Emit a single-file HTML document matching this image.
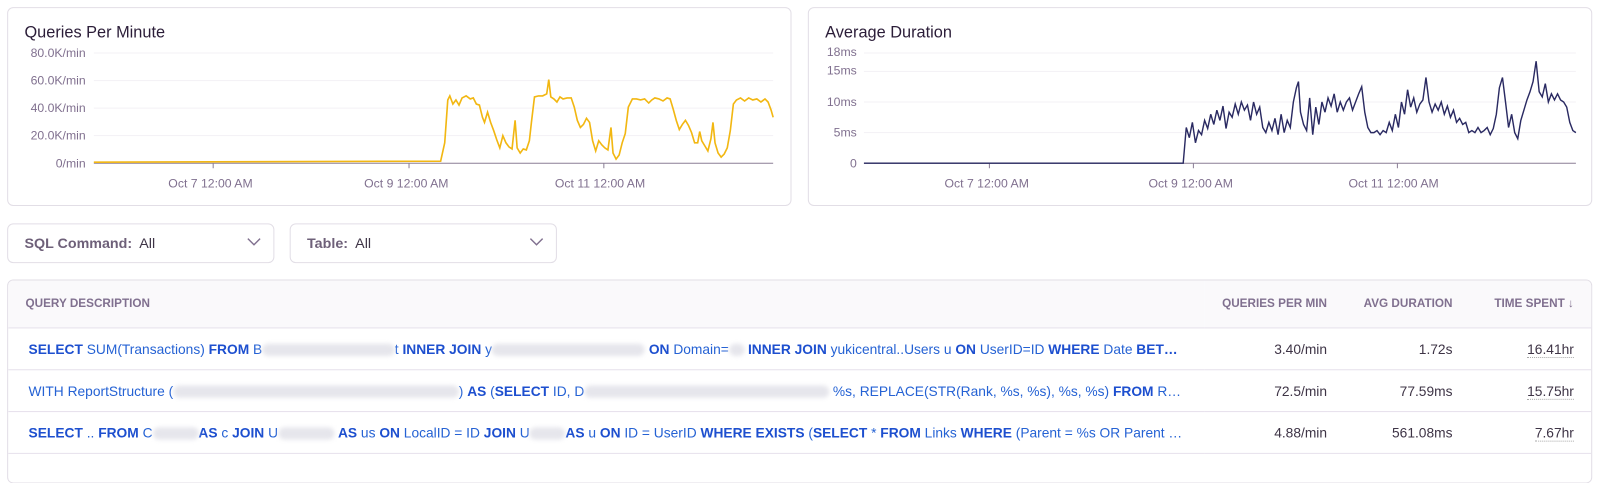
<!DOCTYPE html>
<html><head><meta charset="utf-8"><style>
body{margin:0;width:1600px;height:459px;background:#fff;font-family:"Liberation Sans",sans-serif;overflow:hidden}
#w{position:absolute;left:0;top:0;width:1569px;height:450px;transform:scale(1.02);transform-origin:0 0}
.panel{position:absolute;border:1px solid #e2dee6;border-radius:6px;background:#fff;box-sizing:border-box}
.title{position:absolute;font-size:16px;color:#2b1d38}
.ax{position:absolute;font-size:12px;color:#80708f}
.dd{position:absolute;top:219px;height:39px;border:1px solid #e2dee6;border-radius:6px;box-sizing:border-box;font-size:14px;color:#3e3446;line-height:37px;padding-left:16px}
.dd b{font-weight:bold;color:#6e6079}
.chev{position:absolute;right:12px;top:13px}
table{border-collapse:collapse;width:100%;font-size:13.5px;table-layout:fixed}
th{font-size:11.5px;color:#80708f;font-weight:bold;height:46px;text-align:right;background:#faf9fb;border-bottom:1px solid #e7e1ec;padding:0}
td{height:40px;border-bottom:1px solid #e7e1ec;text-align:right;color:#3e3446;white-space:nowrap;overflow:hidden;padding:0}
.q{color:#2562d4;text-align:left;padding-left:20px}
.q b{color:#1d4fcf}
.bl{display:inline-block;height:12px;vertical-align:middle;background:#e6e6ec;border-radius:6px;filter:blur(2px)}
.u{border-bottom:1px dotted #aaa}
</style></head><body><div id="w">
<div class="panel" style="left:7px;top:7px;width:769px;height:195px"></div>
<div class="panel" style="left:792px;top:7px;width:769px;height:195px"></div>
<div class="title" style="left:24px;top:24px">Queries Per Minute</div>
<div class="title" style="left:809px;top:24px">Average Duration</div>
<svg style="position:absolute;left:0;top:0" width="1600" height="210">
<g stroke="#f3f1f5"><line x1="92" y1="52" x2="758" y2="52"/><line x1="92" y1="79" x2="758" y2="79"/><line x1="92" y1="106" x2="758" y2="106"/><line x1="92" y1="133" x2="758" y2="133"/>
<line x1="847" y1="52" x2="1545" y2="52"/><line x1="847" y1="70" x2="1545" y2="70"/><line x1="847" y1="100" x2="1545" y2="100"/><line x1="847" y1="130" x2="1545" y2="130"/></g>
<g stroke="#8b7f96"><line x1="92" y1="160" x2="758" y2="160"/><line x1="209" y1="160" x2="209" y2="165"/><line x1="401" y1="160" x2="401" y2="165"/><line x1="592" y1="160" x2="592" y2="165"/>
<line x1="847" y1="160" x2="1545" y2="160"/><line x1="970" y1="160" x2="970" y2="165"/><line x1="1170" y1="160" x2="1170" y2="165"/><line x1="1370" y1="160" x2="1370" y2="165"/></g>
<polyline fill="none" stroke="#f2b712" stroke-width="1.6" points="92,159 432,158 436,140 439,98 441,94 444,102 447,98 450,103 453,96 457,94 461,97 464,96 467,102 470,103 473,115 475,120 478,110 481,120 484,128 487,137 490,145 493,133 496,140 499,144 502,146 505,118 507,145 510,150 513,146 516,147 519,138 521,120 524,95 528,94 532,94 536,92 538,78 540,95 543,97 546,100 549,95 552,97 556,96 560,96 563,105 566,118 569,125 572,122 575,116 578,120 581,138 584,148 587,138 590,142 593,145 596,147 599,125 601,150 604,156 607,152 610,140 613,131 616,105 620,97 624,97 628,98 632,97 636,101 639,98 642,96 646,97 650,99 654,96 657,97 660,107 663,118 666,127 669,122 672,118 675,123 678,130 681,140 684,140 686,129 688,138 691,143 694,148 697,136 699,120 701,140 704,150 707,154 710,151 713,145 716,128 719,102 722,98 726,96 730,99 734,96 738,98 742,97 746,100 750,97 753,100 756,108 758,115"/>
<polyline fill="none" stroke="#2a2a62" stroke-width="1.4" points="847,160 1160,160 1163,125 1166,135 1169,120 1172,140 1175,128 1178,132 1181,118 1184,126 1187,112 1190,122 1193,108 1196,118 1199,104 1202,126 1205,110 1208,115 1211,102 1214,112 1217,100 1220,108 1223,103 1226,118 1229,100 1232,112 1235,105 1238,125 1241,130 1244,120 1247,128 1250,116 1253,132 1256,112 1259,130 1262,118 1265,125 1268,100 1271,86 1273,80 1275,110 1278,122 1281,128 1284,96 1287,132 1290,105 1293,122 1296,100 1299,110 1302,96 1305,104 1308,92 1311,110 1314,100 1317,108 1320,100 1323,96 1326,108 1329,100 1332,92 1335,85 1338,110 1341,125 1344,130 1347,130 1350,128 1353,132 1356,128 1359,130 1362,120 1365,128 1368,112 1371,125 1374,100 1377,112 1380,88 1383,105 1386,96 1389,110 1392,102 1395,98 1398,76 1401,100 1404,110 1407,102 1410,108 1413,100 1416,112 1419,104 1422,115 1425,108 1428,120 1431,116 1434,122 1437,120 1440,130 1443,128 1446,130 1449,125 1452,130 1455,128 1458,125 1461,132 1464,126 1467,112 1470,86 1473,76 1476,100 1479,125 1482,112 1485,130 1488,136 1491,118 1494,108 1497,98 1500,90 1503,80 1506,60 1509,90 1512,95 1515,82 1518,100 1521,92 1524,98 1527,92 1530,98 1533,100 1536,105 1539,120 1542,128 1545,130"/>
</svg>
<div class="ax" style="right:1485px;top:45px">80.0K/min</div>
<div class="ax" style="right:1485px;top:72px">60.0K/min</div>
<div class="ax" style="right:1485px;top:99px">40.0K/min</div>
<div class="ax" style="right:1485px;top:126px">20.0K/min</div>
<div class="ax" style="right:1485px;top:153px">0/min</div>
<div class="ax" style="left:165px;top:173px">Oct 7 12:00 AM</div>
<div class="ax" style="left:357px;top:173px">Oct 9 12:00 AM</div>
<div class="ax" style="left:544px;top:173px">Oct 11 12:00 AM</div>
<div class="ax" style="right:729px;top:44px">18ms</div>
<div class="ax" style="right:729px;top:62px">15ms</div>
<div class="ax" style="right:729px;top:93px">10ms</div>
<div class="ax" style="right:729px;top:123px">5ms</div>
<div class="ax" style="right:729px;top:153px">0</div>
<div class="ax" style="left:926px;top:173px">Oct 7 12:00 AM</div>
<div class="ax" style="left:1126px;top:173px">Oct 9 12:00 AM</div>
<div class="ax" style="left:1322px;top:173px">Oct 11 12:00 AM</div>
<div class="dd" style="left:7px;width:262px"><b>SQL Command:</b>&nbsp; All<svg class="chev" width="14" height="9"><path d="M1 1l6 6 6-6" fill="none" stroke="#80708f" stroke-width="1.4"/></svg></div>
<div class="dd" style="left:284px;width:262px"><b>Table:</b>&nbsp; All<svg class="chev" width="14" height="9"><path d="M1 1l6 6 6-6" fill="none" stroke="#80708f" stroke-width="1.4"/></svg></div>
<div class="panel" style="left:7px;top:274px;width:1554px;height:200px;overflow:hidden">
<table>
<colgroup><col><col style="width:120px"><col style="width:123px"><col style="width:136px"></colgroup>
<tr><th style="text-align:left;padding-left:17px">QUERY DESCRIPTION</th><th>QUERIES PER MIN</th><th>AVG DURATION</th><th style="padding-right:17px">TIME SPENT ↓</th></tr>
<tr><td class="q"><b>SELECT</b> SUM(Transactions) <b>FROM</b> B<span class="bl" style="width:130px"></span>t <b>INNER JOIN</b> y<span class="bl" style="width:150px"></span> <b>ON</b> Domain=<span class="bl" style="width:15px"></span> <b>INNER JOIN</b> yukicentral..Users u <b>ON</b> UserID=ID <b>WHERE</b> Date <b>BET…</b></td><td>3.40/min</td><td>1.72s</td><td style="padding-right:17px"><span class="u">16.41hr</span></td></tr>
<tr><td class="q">WITH ReportStructure (<span class="bl" style="width:280px"></span>) <b>AS</b> (<b>SELECT</b> ID, D<span class="bl" style="width:240px"></span> %s, REPLACE(STR(Rank, %s, %s), %s, %s) <b>FROM</b> R…</td><td>72.5/min</td><td>77.59ms</td><td style="padding-right:17px"><span class="u">15.75hr</span></td></tr>
<tr><td class="q"><b>SELECT</b> .. <b>FROM</b> C<span class="bl" style="width:45px"></span><b>AS</b> c <b>JOIN</b> U<span class="bl" style="width:55px"></span> <b>AS</b> us <b>ON</b> LocalID = ID <b>JOIN</b> U<span class="bl" style="width:35px"></span><b>AS</b> u <b>ON</b> ID = UserID <b>WHERE EXISTS</b> (<b>SELECT</b> * <b>FROM</b> Links <b>WHERE</b> (Parent = %s OR Parent …</td><td>4.88/min</td><td>561.08ms</td><td style="padding-right:17px"><span class="u">7.67hr</span></td></tr>
</table></div>
</div></body></html>
